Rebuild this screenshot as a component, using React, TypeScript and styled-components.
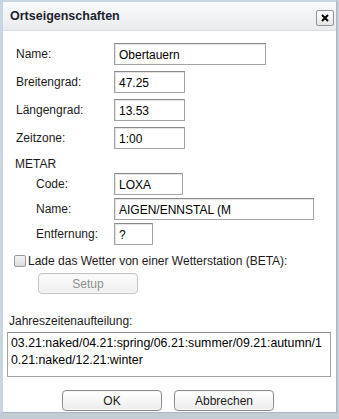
import styled, {createGlobalStyle} from 'styled-components';

const frame = '#a9b7c6';
const fieldBorder = '#a3a3a3';
const text = '#1b1b1b';
const font = '"Liberation Sans", Arial, sans-serif';

const GlobalStyle = createGlobalStyle`
  html, body {
    margin: 0;
    padding: 0;
    background: #c3cbd3;
  }
  body {
    width: 339px;
    height: 419px;
    overflow: hidden;
    font-family: ${font};
  }
`;

export default function App() {
  return (
    <>
      <GlobalStyle/>
      <Dialog>
        <TitleBar>
          <Title>Ortseigenschaften</Title>
          <CloseButton aria-label="close">
            <svg width="8" height="8" viewBox="0 0 8 8">
              <path d="M1 1 L7 7 M7 1 L1 7" stroke="#000" strokeWidth="2"/>
            </svg>
          </CloseButton>
        </TitleBar>
        <Content>
          <Fields>
            <Row>
              <Label>Name:</Label>
              <Field width={152} defaultValue="Obertauern"/>
            </Row>
            <Row>
              <Label>Breitengrad:</Label>
              <Field width={71} defaultValue="47.25"/>
            </Row>
            <Row>
              <Label>Längengrad:</Label>
              <Field width={71} defaultValue="13.53"/>
            </Row>
            <Row>
              <Label>Zeitzone:</Label>
              <Field width={71} defaultValue="1:00"/>
            </Row>
          </Fields>
          <Section>METAR</Section>
          <SubFields>
            <Row>
              <Label indent>Code:</Label>
              <Field width={69} defaultValue="LOXA"/>
            </Row>
            <Row>
              <Label indent>Name:</Label>
              <Field width={200} defaultValue="AIGEN/ENNSTAL (M"/>
            </Row>
            <Row>
              <Label indent>Entfernung:</Label>
              <Field width={39} defaultValue="?"/>
            </Row>
          </SubFields>
          <CheckRow>
            <Box type="checkbox"/>
            <CheckLabel>Lade das Wetter von einer Wetterstation (BETA):</CheckLabel>
          </CheckRow>
          <SetupButton disabled>Setup</SetupButton>
          <AreaLabel>Jahreszeitenaufteilung:</AreaLabel>
          <Area
            rows={2}
            defaultValue="03.21:naked/04.21:spring/06.21:summer/09.21:autumn/10.21:naked/12.21:winter"
          />
          <Buttons>
            <Button>OK</Button>
            <Button>Abbrechen</Button>
          </Buttons>
        </Content>
      </Dialog>
    </>
  );
}

const Dialog = styled.div`
  width: 337px;
  height: 413px;
  box-sizing: border-box;
  border: 1px solid ${frame};
  border-left: 3px solid #c8d5e2;
  border-top: 2px solid #c8d5e2;
  background: #fff;
  display: flex;
  flex-direction: column;
`;

const TitleBar = styled.div`
  height: 29px;
  box-sizing: border-box;
  display: flex;
  align-items: center;
  justify-content: space-between;
  padding: 0 2px 0 7px;
  background: linear-gradient(#f9fafb, #e9ecef);
  border-bottom: 1px solid #d7dde3;
`;

const Title = styled.span`
  font-size: 12.5px;
  font-weight: 700;
  color: #1c2430;
  margin-top: -1px;
`;

const CloseButton = styled.button`
  width: 18px;
  height: 16px;
  padding: 0;
  margin-top: 3px;
  display: flex;
  align-items: center;
  justify-content: center;
  border: 1px solid #8e949a;
  border-radius: 2px;
  background: linear-gradient(#ffffff, #e6e6e6);
`;

const Content = styled.div`
  display: flex;
  flex-direction: column;
  padding: 12px 5px 0 2px;
`;

const Fields = styled.div`
  display: flex;
  flex-direction: column;
  gap: 6px;
`;

const SubFields = styled.div`
  display: flex;
  flex-direction: column;
  gap: 3px;
  margin-top: 0;
`;

const Row = styled.div`
  display: flex;
  align-items: center;
  height: 22px;
`;

const Label = styled.span<{indent?: boolean}>`
  width: 109px;
  box-sizing: border-box;
  padding-left: ${({indent}) => (indent ? 31 : 11)}px;
  font-size: 12px;
  color: ${text};
`;

const Field = styled.input<{width: number}>`
  width: ${({width}) => width}px;
  height: 22px;
  box-sizing: border-box;
  margin: 0;
  padding: 1px 4px 0;
  border: 1px solid ${fieldBorder};
  border-top-color: #8a8a8a;
  box-shadow: inset 1px 1px 0 #e4e4e4;
  font-family: ${font};
  font-size: 12px;
  color: #000;
  outline: none;
`;

const Section = styled.div`
  font-size: 12px;
  color: ${text};
  padding-left: 10px;
  margin-top: 8px;
  margin-bottom: 1px;
  line-height: 15px;
`;

const CheckRow = styled.label`
  display: flex;
  align-items: center;
  margin-top: 9px;
  padding-left: 9px;
  height: 14px;
`;

const Box = styled.input`
  appearance: none;
  width: 12px;
  height: 12px;
  margin: 0 2px 0 0;
  border: 1px solid #9a9a9a;
  border-radius: 2px;
  background: linear-gradient(#f4f4f4, #dcdcdc);
`;

const CheckLabel = styled.span`
  font-size: 12px;
  color: ${text};
`;

const ButtonBase = styled.button`
  height: 21px;
  box-sizing: border-box;
  padding: 0;
  border: 1px solid #8c8c8c;
  border-radius: 4px;
  background: linear-gradient(#ffffff, #ececec);
  box-shadow: inset 0 0 0 1px #f6f6f6;
  font-family: ${font};
  font-size: 12px;
  color: ${text};
`;

const SetupButton = styled(ButtonBase)`
  width: 100px;
  margin: 5px 0 0 33px;
  border-color: #c4c4c4;
  color: #8f8f8f;
  background: linear-gradient(#fbfbfb, #efefef);
`;

const AreaLabel = styled.div`
  font-size: 12px;
  color: ${text};
  padding-left: 4px;
  margin-top: 20px;
  line-height: 15px;
`;

const Area = styled.textarea`
  width: 324px;
  height: 45px;
  box-sizing: border-box;
  margin: 3px 0 0 2px;
  padding: 2px 3px;
  border: 1px solid ${fieldBorder};
  border-top-color: #8a8a8a;
  resize: none;
  overflow: hidden;
  word-break: break-all;
  font-family: ${font};
  font-size: 12.35px;
  line-height: 17px;
  color: #000;
  outline: none;
`;

const Buttons = styled.div`
  display: flex;
  justify-content: center;
  gap: 12px;
  margin-top: 13px;
`;

const Button = styled(ButtonBase)`
  width: 100px;
`;
